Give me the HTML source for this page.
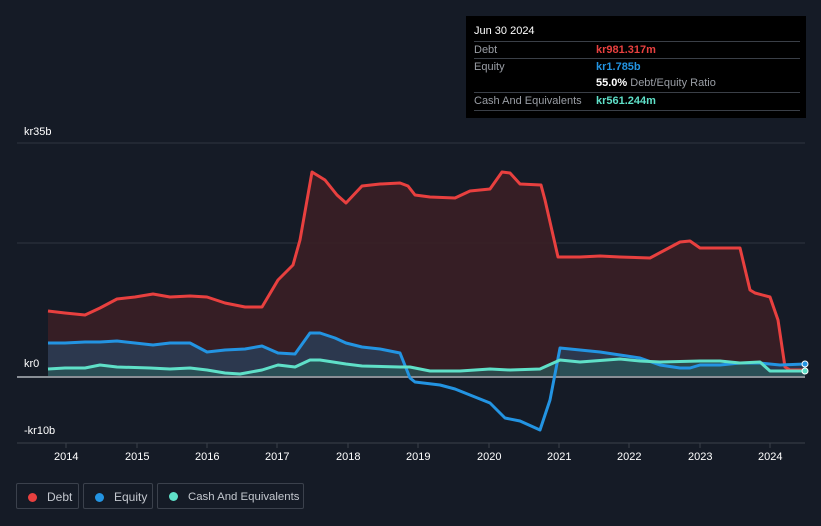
<!DOCTYPE html>
<html><head><meta charset="utf-8"><style>
body{margin:0;width:821px;height:526px;background:#151b26;font-family:"Liberation Sans",sans-serif;overflow:hidden;position:relative}
.tt{position:absolute;left:466px;top:16px;width:340px;height:102px;background:#000;color:#fff;font-size:11px}
.tt .r{position:absolute;left:8px;width:326px;border-top:1px solid #3a3f47;height:17px;line-height:17px;color:#9a9ea5}
.tt b{position:absolute;left:122px;font-weight:bold}
.lg{position:absolute;top:483px;height:26px;border:1px solid #3b414c;border-radius:2px;color:#c4c8cf;font-size:12px;line-height:26px;box-sizing:border-box;white-space:nowrap}
.lg i{display:inline-block;width:9px;height:9px;border-radius:50%;margin:0 10px 0 11px;vertical-align:-1px}
.ax{position:absolute;color:#fff;font-size:11px}
</style></head><body>
<svg width="821" height="526" style="position:absolute;left:0;top:0">
<line x1="17" y1="143" x2="805" y2="143" stroke="#2e3440"/>
<line x1="17" y1="243" x2="805" y2="243" stroke="#2e3440"/>
<path d="M48,311 L65,313 85,315 100,308 117,299 135,297 153,294 170,297 190,296 207,297 225,303 245,307 262,307 278,280 293,265 300,240 312,172 325,180 337,195 346,203 362,186 380,184 400,183 408,186 415,195 430,197 455,198 470,191 490,189 502,172 510,173 520,184 541,185 545,200 558,257 580,257 600,256 620,257 650,258 665,250 680,242 690,241 700,248 720,248 740,248 750,290 755,293 770,297 778,320 785,367 790,370 805,370 L805,376 L48,376Z" fill="#3a1f26" opacity="0.9"/>
<path d="M48,343 L65,343 85,342 100,342 117,341 135,343 153,345 170,343 190,343 207,352 225,350 245,349 262,346 278,353 295,354 310,333 320,333 335,338 346,343 362,347 380,349 400,353 410,376 L560,376 560,348 580,350 600,352 620,355 640,358 660,365 680,368 690,368 700,365 720,365 740,363 760,363 780,365 805,364 805,376 48,376Z" fill="#2a3d56" opacity="0.85"/>
<path d="M48,369 L65,368 85,368 100,365 117,367 150,368 170,369 190,368 207,370 225,373 240,374 262,370 278,365 295,367 310,360 320,360 346,364 362,366 400,367 410,367 430,371 460,371 490,369 510,370 540,369 560,360 580,362 620,359 640,361 660,362 700,361 720,361 740,363 760,362 770,371 805,371 805,376 48,376Z" fill="#2a5a5a" opacity="0.7"/>
<line x1="17" y1="377" x2="805" y2="377" stroke="#b0b4ba" stroke-width="1.5"/>
<line x1="17" y1="443" x2="805" y2="443" stroke="#3a404b"/>
<g stroke="#3a404b"><line x1="66" y1="443" x2="66" y2="448"/><line x1="137" y1="443" x2="137" y2="448"/><line x1="207" y1="443" x2="207" y2="448"/><line x1="277" y1="443" x2="277" y2="448"/><line x1="348" y1="443" x2="348" y2="448"/><line x1="418" y1="443" x2="418" y2="448"/><line x1="489" y1="443" x2="489" y2="448"/><line x1="559" y1="443" x2="559" y2="448"/><line x1="629" y1="443" x2="629" y2="448"/><line x1="700" y1="443" x2="700" y2="448"/><line x1="770" y1="443" x2="770" y2="448"/></g>
<path d="M48,311 L65,313 85,315 100,308 117,299 135,297 153,294 170,297 190,296 207,297 225,303 245,307 262,307 278,280 293,265 300,240 312,172 325,180 337,195 346,203 362,186 380,184 400,183 408,186 415,195 430,197 455,198 470,191 490,189 502,172 510,173 520,184 541,185 545,200 558,257 580,257 600,256 620,257 650,258 665,250 680,242 690,241 700,248 720,248 740,248 750,290 755,293 770,297 778,320 785,367 790,370 805,370" fill="none" stroke="#e8403f" stroke-width="3" stroke-linejoin="round"/>
<path d="M48,343 L65,343 85,342 100,342 117,341 135,343 153,345 170,343 190,343 207,352 225,350 245,349 262,346 278,353 295,354 310,333 320,333 335,338 346,343 362,347 380,349 400,353 410,378 415,382 440,385 455,389 470,395 490,403 505,418 520,421 540,430 550,400 560,348 580,350 600,352 620,355 640,358 660,365 680,368 690,368 700,365 720,365 740,363 760,363 780,365 805,364" fill="none" stroke="#2394e2" stroke-width="3" stroke-linejoin="round"/>
<path d="M48,369 L65,368 85,368 100,365 117,367 150,368 170,369 190,368 207,370 225,373 240,374 262,370 278,365 295,367 310,360 320,360 346,364 362,366 400,367 410,367 430,371 460,371 490,369 510,370 540,369 560,360 580,362 620,359 640,361 660,362 700,361 720,361 740,363 760,362 770,371 805,371" fill="none" stroke="#5fe0c8" stroke-width="3" stroke-linejoin="round"/>
<circle cx="805" cy="364" r="3" fill="#2394e2" stroke="#fff"/>
<circle cx="805" cy="371" r="3" fill="#5fe0c8" stroke="#fff"/>
</svg>
<div class="ax" style="left:24px;top:126px">kr35b</div>
<div class="ax" style="left:24px;top:358px">kr0</div>
<div class="ax" style="left:24px;top:425px">-kr10b</div>
<div class="ax" style="left:54px;top:451px">2014</div><div class="ax" style="left:125px;top:451px">2015</div><div class="ax" style="left:195px;top:451px">2016</div><div class="ax" style="left:265px;top:451px">2017</div><div class="ax" style="left:336px;top:451px">2018</div><div class="ax" style="left:406px;top:451px">2019</div><div class="ax" style="left:477px;top:451px">2020</div><div class="ax" style="left:547px;top:451px">2021</div><div class="ax" style="left:617px;top:451px">2022</div><div class="ax" style="left:688px;top:451px">2023</div><div class="ax" style="left:758px;top:451px">2024</div>
<div class="tt">
<div style="position:absolute;left:8px;top:9px">Jun 30 2024</div>
<div class="r" style="top:25px">Debt<b style="color:#e8403f">kr981.317m</b></div>
<div class="r" style="top:42px">Equity<b style="color:#2394e2">kr1.785b</b></div>
<div class="r" style="top:59px;border:none"><b style="color:#fff">55.0% <span style="font-weight:normal;color:#9a9ea5">Debt/Equity Ratio</span></b></div>
<div class="r" style="top:76px">Cash And Equivalents<b style="color:#5fe0c8">kr561.244m</b></div>
<div style="position:absolute;left:8px;top:94px;width:326px;border-top:1px solid #3a3f47"></div>
</div>
<div class="lg" style="left:16px;width:63px"><i style="background:#e8403f"></i>Debt</div>
<div class="lg" style="left:83px;width:70px"><i style="background:#2394e2"></i>Equity</div>
<div class="lg" style="left:157px;width:147px;font-size:11.4px"><i style="background:#5fe0c8"></i>Cash And Equivalents</div>
</body></html>
